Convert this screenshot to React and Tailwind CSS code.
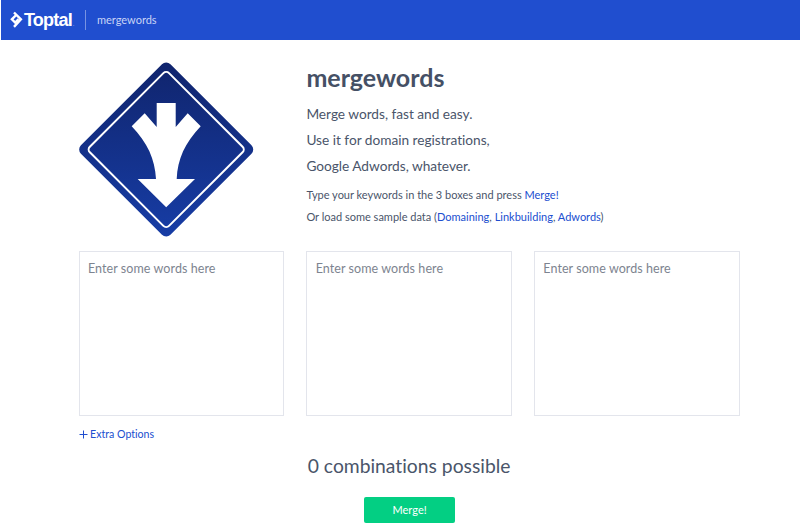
import React from 'react';

function ToptalMark() {
  return (
    <svg className="ml-[10px] h-[18px] w-[13px] shrink-0" viewBox="0 0 13 18" fill="none" stroke="#fff" strokeWidth="2.4">
      <path d="M4 1.500 L10.900 8.300 L4 15.900" />
      <path d="M6.200 4 L1.900 8.300 L5.200 11.600 L8.600 8.200" />
    </svg>
  );
}

function MergeSign() {
  return (
    <svg className="-ml-px block h-[176px] w-[176px] shrink-0" viewBox="0 0 176 176">
      <defs>
        <linearGradient id="sign" x1="0" y1="0" x2="1" y2="1">
          <stop offset="0" stopColor="#10246c" />
          <stop offset="1" stopColor="#173da6" />
        </linearGradient>
      </defs>
      <rect x="24.9" y="25.2" width="126.6" height="126.6" rx="6" transform="rotate(45 88.2 88.5)" fill="url(#sign)" />
      <rect x="32.2" y="32.5" width="112" height="112" rx="4" transform="rotate(45 88.2 88.5)" fill="none" stroke="#fff" strokeWidth="2" />
      <path
        d="M78.7 42 H97.7 V66 L109.7 52.3 L122.7 65.3 C107 82 99.500 98 98.700 118 H117 L88.200 146.300 L59.700 118 H78 C77 98 69.500 82 53.700 65.300 L66.700 52.300 L78.700 66 Z"
        fill="#fff"
      />
    </svg>
  );
}

function WordBox() {
  return (
    <textarea
      className="block h-[165px] w-full resize-none rounded-none border border-[#e3e5ec] bg-white px-[8.400px] py-[7px] text-[12.5px] leading-[20px] tracking-[0.07px] text-[#455065] placeholder:text-[#7d8490] outline-none"
      placeholder="Enter some words here"
    />
  );
}

const link = 'text-[#204ecf]';

export default function App() {
  return (
    <div className="h-[530px] w-[800px] overflow-hidden bg-white font-['Lato',sans-serif] text-[#455065] [font-variant-ligatures:none]">
      <header className="ml-px flex h-[40px] items-center bg-[#204ecf] text-white">
        <div className="-ml-px flex h-full items-center">
          <ToptalMark />
          <span className="ml-px w-[49px] whitespace-nowrap font-['Liberation_Sans',sans-serif] text-[18px] font-bold leading-[20px] tracking-[-0.8px]">Toptal</span>
          <span className="mt-[10px] w-[2px] text-[5px] opacity-60">.</span>
        </div>
        <div className="ml-[10px] h-[20px] w-px bg-[#7893e2]" />
        <span className="ml-[11px] text-[11px] text-[#c8d4f6]">mergewords</span>
      </header>

      <main className="ml-[78.6px] w-[661px]">
        <section className="flex pt-[21px]">
          <MergeSign />
          <div className="ml-[52.800px] h-[190px]">
            <h1 className="text-[25px] font-bold leading-[32px]">mergewords</h1>
            <div className="mt-[8px] text-[13.700px] leading-[26px] tracking-[-0.02px] text-[#4a556a]">
              <p>Merge words, fast and easy.</p>
              <p>Use it for domain registrations,</p>
              <p>Google Adwords, whatever.</p>
            </div>
            <div className="mt-[5px] whitespace-nowrap text-[11px] leading-[22px] text-[#4a556a]">
              <p>Type your keywords in the 3 boxes and press <a className={link}>Merge!</a></p>
              <p>Or load some sample data (<a className={link}>Domaining</a>, <a className={link}>Linkbuilding</a>, <a className={link}>Adwords</a>)</p>
            </div>
          </div>
        </section>
        <section className="grid grid-cols-3 gap-[22px]">
          <WordBox />
          <WordBox />
          <WordBox />
        </section>
        <a className="mt-[10px] flex h-[17px] items-center text-[10.600px] text-[#204ecf]">
          <svg className="mr-[2.500px] h-[9px] w-[9px]" viewBox="0 0 9 9" stroke="#204ecf" strokeWidth="1">
            <path d="M4.500 0.500 V8.500 M0.500 4.500 H8.500" />
          </svg>
          <span>Extra Options</span>
        </a>
        <div className="mt-[9px] flex flex-col items-center">
          <p className="text-[19.300px] leading-[28px] text-[#4a556a]">0 combinations possible</p>
          <button className="mt-[17px] ml-px h-[26px] w-[91px] rounded-[2px] bg-[#03cf83] text-[11px] text-white">Merge!</button>
        </div>
      </main>
    </div>
  );
}
